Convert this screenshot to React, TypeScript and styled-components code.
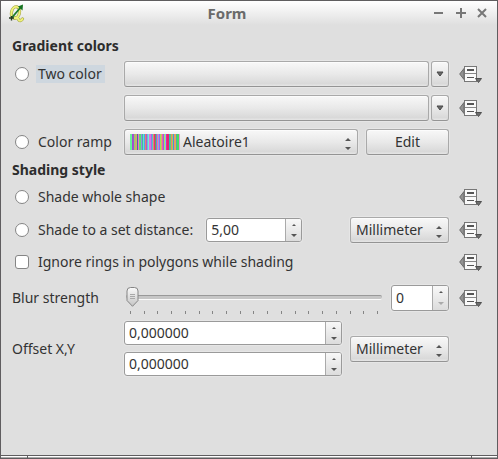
import React from "react";
import styled, { createGlobalStyle, css } from "styled-components";

const GlobalStyle = createGlobalStyle`
  *, *::before, *::after { box-sizing: border-box; }
  html, body { margin: 0; padding: 0; }
  body, button, input, select {
    font-family: "Noto Sans", "Open Sans", sans-serif;
    font-size: 14px;
    line-height: 18px;
    color: #333;
  }
`;

const face = css`
  background: linear-gradient(#f8f8f8, #e9e9e9 50%, #d9d9d9 90%, #e6e6e6);
  border: 1px solid #a9a9a9;
  border-bottom-color: #949494;
  border-radius: 3px;
  box-shadow: inset 0 1px 0 #fcfcfc, 0 0 0 1px #e6e6e6;
`;

const Window = styled.main`
  min-height: 100vh;
  display: flex;
  flex-direction: column;
  background: #dfdfdf;
  border: 1px solid #5f5d5f;
`;

const TitleBar = styled.header`
  display: grid;
  grid-template-columns: 16px 1fr 60px;
  align-items: center;
  height: 24px;
  padding: 0 8px;
  background: linear-gradient(#ffffff, #dfdfdf);
`;

const Title = styled.h1`
  margin: 0;
  text-align: center;
  font-size: 15px;
  line-height: 20px;
  font-weight: 700;
  color: #6a6a6a;
`;

const WindowButtons = styled.div`
  display: flex;
  justify-content: flex-end;
  gap: 8px;
`;

const WindowButton = styled.button`
  width: 14px;
  height: 14px;
  padding: 0;
  border: 0;
  background: none;
  svg { display: block; }
`;

const Form = styled.form`
  flex: 1;
  display: flex;
  flex-direction: column;
  gap: 4px;
  padding: 10px 14px 10px 11px;
`;

const Section = styled.section<{ $gap: number }>`
  display: flex;
  flex-direction: column;
  gap: ${(p) => p.$gap}px;
`;

const Heading = styled.h2`
  margin: 0 0 -4px;
  font-size: 14px;
  line-height: 22px;
  font-weight: 700;
  color: #2d2d2d;
`;

const Row = styled.div<{ $height?: number }>`
  display: grid;
  grid-template-columns: 112px minmax(0, 1fr) 24px;
  align-items: center;
  min-height: ${(p) => p.$height ?? 26}px;
`;

const Wide = styled.div`
  grid-column: 1 / 3;
  display: flex;
  align-items: center;
  justify-content: space-between;
  padding-right: 10px;
`;

const Controls = styled.div<{ $gap?: number }>`
  display: flex;
  align-items: center;
  gap: ${(p) => p.$gap ?? 8}px;
  padding-right: 10px;
`;

const Choice = styled.label<{ $active?: boolean }>`
  display: flex;
  align-items: center;
  gap: 7px;
  padding-left: 3px;
  white-space: nowrap;
  span {
    padding: 0 3px 0 2px;
    background: ${(p) => (p.$active ? "#ced7df" : "transparent")};
  }
`;

const Mark = styled.input`
  appearance: none;
  flex: none;
  width: 14px;
  height: 14px;
  margin: 0;
  background: #fff;
  border: 1px solid #858585;
  border-radius: ${(p) => (p.type === "radio" ? "50%" : "3px")};
  &:checked { background: #777; box-shadow: inset 0 0 0 3px #fff; }
`;

const FieldLabel = styled.label`
  white-space: nowrap;
`;

const Button = styled.button<{ $width?: number }>`
  ${face}
  display: flex;
  align-items: center;
  justify-content: center;
  flex: ${(p) => (p.$width ? "none" : "1")};
  width: ${(p) => (p.$width ? p.$width + "px" : "auto")};
  height: 26px;
  padding: 0;
`;

const SplitButton = styled.div`
  flex: 1;
  display: flex;
  gap: 2px;
`;

const IconButton = styled.button`
  width: 24px;
  height: 20px;
  padding: 0;
  border: 0;
  background: none;
  svg { display: block; }
`;

const Combo = styled.div<{ $width?: number }>`
  ${face}
  position: relative;
  display: flex;
  align-items: center;
  flex: ${(p) => (p.$width ? "none" : "1")};
  width: ${(p) => (p.$width ? p.$width + "px" : "auto")};
  height: 26px;
  padding-left: 5px;
  gap: 3px;
  select {
    appearance: none;
    flex: 1;
    min-width: 0;
    height: 24px;
    padding: 0;
    border: 0;
    outline: 0;
    background: none;
  }
`;

const ComboArrows = styled.svg`
  position: absolute;
  right: 5px;
  top: 7px;
  pointer-events: none;
`;

const Spin = styled.div<{ $width: number; $height: number }>`
  flex: none;
  display: flex;
  width: ${(p) => p.$width}px;
  height: ${(p) => p.$height}px;
  border: 1px solid #9a9a9a;
  border-radius: 3px;
  box-shadow: 0 0 0 1px #e6e6e6;
  background: #fff;
  overflow: hidden;
  input {
    flex: 1;
    min-width: 0;
    padding: 0 0 0 4px;
    border: 0;
    outline: 0;
    background: none;
  }
`;

const SpinButtons = styled.div`
  flex: none;
  display: flex;
  flex-direction: column;
  width: 16px;
  border-left: 1px solid #aaa;
  background: linear-gradient(#f8f8f8, #dcdcdc);
`;

const SpinButton = styled.button`
  flex: 1;
  display: flex;
  align-items: center;
  justify-content: center;
  padding: 0;
  border: 0;
  background: none;
  color: #555;
  &:disabled { color: #aaa; }
`;

const SliderBox = styled.div`
  flex: 1;
  display: flex;
  flex-direction: column;
  gap: 4px;
  padding: 6px 1px 0 2px;
`;

const thumb =
  "<svg xmlns='http://www.w3.org/2000/svg' width='13' height='20'><defs><linearGradient id='g' x2='0' y2='1'><stop stop-color='#fafafa'/><stop offset='1' stop-color='#c4c4c4'/></linearGradient></defs><path d='M1 4Q1 .5 4.500 .5H8.500Q12 .5 12 4V13.500L6.500 19.300L1 13.500Z' fill='url(#g)' stroke='#858585'/><path d='M4 7.500H9M4 9.500H9M4 11.500H9' stroke='#a8a8a8'/></svg>";

const Slider = styled.input`
  appearance: none;
  display: block;
  width: 100%;
  height: 20px;
  margin: 0;
  background: none;
  &::-webkit-slider-runnable-track {
    height: 5px;
    border-radius: 2px;
    border-top: 1px solid #999;
    border-bottom: 1px solid #fafafa;
    background: #c6c6c6;
  }
  &::-webkit-slider-thumb {
    appearance: none;
    width: 13px;
    height: 20px;
    margin-top: -9px;
    background: url("data:image/svg+xml,${encodeURIComponent(thumb).replace(/'/g, "%27")}");
  }
`;

const Ticks = styled.div`
  display: flex;
  justify-content: space-between;
  padding: 0 4px;
  i { width: 1px; height: 3px; background: #858585; }
`;

const Stack = styled.div`
  display: flex;
  flex-direction: column;
  gap: 7px;
`;

const StatusBar = styled.footer`
  display: grid;
  grid-template-columns: 26px 1fr 26px;
  height: 3px;
  border-top: 1px solid #5f5d5f;
  span {
    background: linear-gradient(#fff 50%, #aaa 50%);
  }
  span + span { border-left: 1px solid #5f5d5f; }
`;

const RAMP = (
  "#66f29a #66f29a #a050d0 #a050d0 #8fd070 #d8a070 #b0c860 #6050c0 #f078c0 #60e070 " +
  "#60e070 #9090e0 #48b0a8 #60e8c8 #50a0f0 #e88070 #b060c0 #70b0e8 #70f0d0 #e070e0 " +
  "#e070e0 #8878f0 #60c8b0 #f07880 #e83070 #70a050 #7078f0 #f08090 #80a8f8 #b060e0 " +
  "#90e858 #e8a070 #e860b0 #9860e0 #b0e060 #70d0e8 #f02890 #e82078 #e82078 #30c0a8 " +
  "#60c880 #f08070 #a0d850 #6080e0 #d8a860 #f09860 #50b0a0 #40e060 #40e060 #e890d8"
).split(" ");

const Ramp = () => (
  <svg width="50" height="16" viewBox="0 0 50 16" shapeRendering="crispEdges" aria-hidden="true">
    {RAMP.map((fill, i) => (
      <rect key={i} x={i} width="1" height="16" fill={fill} />
    ))}
  </svg>
);

const Logo = () => (
  <svg width="16" height="19" viewBox="0 0 16 19" aria-hidden="true">
    <g fill="none" strokeLinecap="round">
      <g stroke="#a3a347" strokeWidth="3.200">
        <ellipse cx="6.500" cy="8.500" rx="4" ry="5.800" transform="rotate(14 6.500 8.500)" />
        <path d="M6 14Q8 12.500 9.500 15.500Q11 18 13.500 15" />
      </g>
      <g stroke="#eff27a" strokeWidth="2">
        <ellipse cx="6.500" cy="8.500" rx="4" ry="5.800" transform="rotate(14 6.500 8.500)" />
        <path d="M6 14Q8 12.500 9.500 15.500Q11 18 13.500 15" />
      </g>
    </g>
    <path d="M3 13.500L11.500 3.500" stroke="#1b7a2a" strokeWidth="1.800" />
    <path d="M14 .5L13.500 6.500L9 2.500Z" fill="#14721f" />
    <path d="M0 14H5M2.500 12V16.500" stroke="#263820" strokeWidth="1.400" />
  </svg>
);

const DownArrow = () => (
  <svg width="8" height="6" viewBox="0 0 8 6" aria-hidden="true">
    <path d="M1 1H7L4 5Z" fill="#6a6a6a" stroke="#484848" />
  </svg>
);

const OverrideButton = ({ name }: { name: string }) => (
  <IconButton type="button" aria-label={`Data defined override: ${name}`}>
    <svg width="24" height="20" viewBox="0 0 24 20" aria-hidden="true">
      <path d="M5 4.500V15.500L.7 10Z" fill="#929292" stroke="#6b6b6b" />
      <rect x="5.500" y="2.500" width="12" height="15" fill="#fafafa" stroke="#777" />
      <path d="M6 9.500H17" stroke="#888" />
      <path d="M8 6H15" stroke="#555" strokeWidth="2" />
      <path d="M8 13.500H15" stroke="#555" />
      <path d="M16.500 14.500H22.500L19.500 18.500Z" fill="#6e6e6e" stroke="#505050" />
    </svg>
  </IconButton>
);

function ComboBox(p: { id: string; label: string; value: string; width?: number; children?: React.ReactNode }) {
  return (
    <Combo $width={p.width}>
      {p.children}
      <select id={p.id} aria-label={p.label}>
        <option>{p.value}</option>
      </select>
      <ComboArrows width="8" height="14" viewBox="0 0 8 14" aria-hidden="true">
        <path d="M1 4H7L4 1ZM1 10H7L4 13Z" fill="#555" />
      </ComboArrows>
    </Combo>
  );
}

function SpinBox(p: { id: string; label: string; value: string; width: number; height?: number; atMinimum?: boolean }) {
  return (
    <Spin $width={p.width} $height={p.height ?? 24}>
      <input id={p.id} type="text" inputMode="decimal" aria-label={p.label} defaultValue={p.value} />
      <SpinButtons>
        <SpinButton type="button" aria-label={`Increase ${p.label}`}>
          <svg width="6" height="4" viewBox="0 0 6 4"><path d="M1 3H5L3 1Z" fill="currentColor" /></svg>
        </SpinButton>
        <SpinButton type="button" disabled={p.atMinimum} aria-label={`Decrease ${p.label}`}>
          <svg width="6" height="4" viewBox="0 0 6 4"><path d="M0 0H6L3 3Z" fill="currentColor" /></svg>
        </SpinButton>
      </SpinButtons>
    </Spin>
  );
}

const ColorPicker = ({ name }: { name: string }) => (
  <SplitButton>
    <Button type="button" aria-label={name} />
    <Button type="button" $width={18} aria-label={`${name} menu`}>
      <DownArrow />
    </Button>
  </SplitButton>
);

export default function App() {
  return (
    <>
      <GlobalStyle />
      <Window>
        <TitleBar>
          <Logo />
          <Title>Form</Title>
          <WindowButtons>
            <WindowButton type="button" aria-label="Minimize">
              <svg width="14" height="14" viewBox="0 0 14 14"><path d="M3 7H12" stroke="#777" strokeWidth="2" /></svg>
            </WindowButton>
            <WindowButton type="button" aria-label="Maximize">
              <svg width="14" height="14" viewBox="0 0 14 14"><path d="M3 7H13M8 2V12" stroke="#777" strokeWidth="2" /></svg>
            </WindowButton>
            <WindowButton type="button" aria-label="Close">
              <svg width="14" height="14" viewBox="0 0 14 14"><path d="M3 3L11 11M11 3L3 11" stroke="#777" strokeWidth="2" /></svg>
            </WindowButton>
          </WindowButtons>
        </TitleBar>

        <Form>
          <Section $gap={8}>
            <Heading>Gradient colors</Heading>
            <Row>
              <Choice $active>
                <Mark type="radio" name="gradient" />
                <span>Two color</span>
              </Choice>
              <Controls><ColorPicker name="First color" /></Controls>
              <OverrideButton name="first color" />
            </Row>
            <Row>
              <span />
              <Controls><ColorPicker name="Second color" /></Controls>
              <OverrideButton name="second color" />
            </Row>
            <Row>
              <Choice>
                <Mark type="radio" name="gradient" />
                <span>Color ramp</span>
              </Choice>
              <Controls>
                <ComboBox id="ramp" label="Color ramp" value="Aleatoire1"><Ramp /></ComboBox>
                <Button type="button" $width={83}>Edit</Button>
              </Controls>
            </Row>
          </Section>

          <Section $gap={7}>
            <Heading>Shading style</Heading>
            <Row>
              <Wide>
                <Choice>
                  <Mark type="radio" name="shading" />
                  <span>Shade whole shape</span>
                </Choice>
              </Wide>
              <OverrideButton name="whole shape" />
            </Row>
            <Row>
              <Wide>
                <Controls $gap={10}>
                  <Choice>
                    <Mark type="radio" name="shading" />
                    <span>Shade to a set distance:</span>
                  </Choice>
                  <SpinBox id="distance" label="Distance" value="5,00" width={96} />
                </Controls>
                <ComboBox id="distance-unit" label="Distance unit" value="Millimeter" width={99} />
              </Wide>
              <OverrideButton name="distance" />
            </Row>
            <Row $height={24}>
              <Wide>
                <Choice>
                  <Mark type="checkbox" />
                  <span>Ignore rings in polygons while shading</span>
                </Choice>
              </Wide>
              <OverrideButton name="ignore rings" />
            </Row>
            <Row>
              <FieldLabel htmlFor="blur">Blur strength</FieldLabel>
              <Controls>
                <SliderBox>
                  <Slider id="blur" type="range" min="0" max="18" defaultValue="0" />
                  <Ticks aria-hidden="true">
                    {Array.from({ length: 19 }, (_, i) => <i key={i} />)}
                  </Ticks>
                </SliderBox>
                <SpinBox id="blur-value" label="Blur value" value="0" width={58} height={26} atMinimum />
              </Controls>
              <OverrideButton name="blur strength" />
            </Row>
            <Row>
              <FieldLabel htmlFor="offset-x">Offset X,Y</FieldLabel>
              <Controls>
                <Stack>
                  <SpinBox id="offset-x" label="Offset X" value="0,000000" width={218} />
                  <SpinBox id="offset-y" label="Offset Y" value="0,000000" width={218} />
                </Stack>
                <ComboBox id="offset-unit" label="Offset unit" value="Millimeter" width={99} />
              </Controls>
            </Row>
          </Section>
        </Form>

        <StatusBar>
          <span />
          <span />
          <span />
        </StatusBar>
      </Window>
    </>
  );
}
